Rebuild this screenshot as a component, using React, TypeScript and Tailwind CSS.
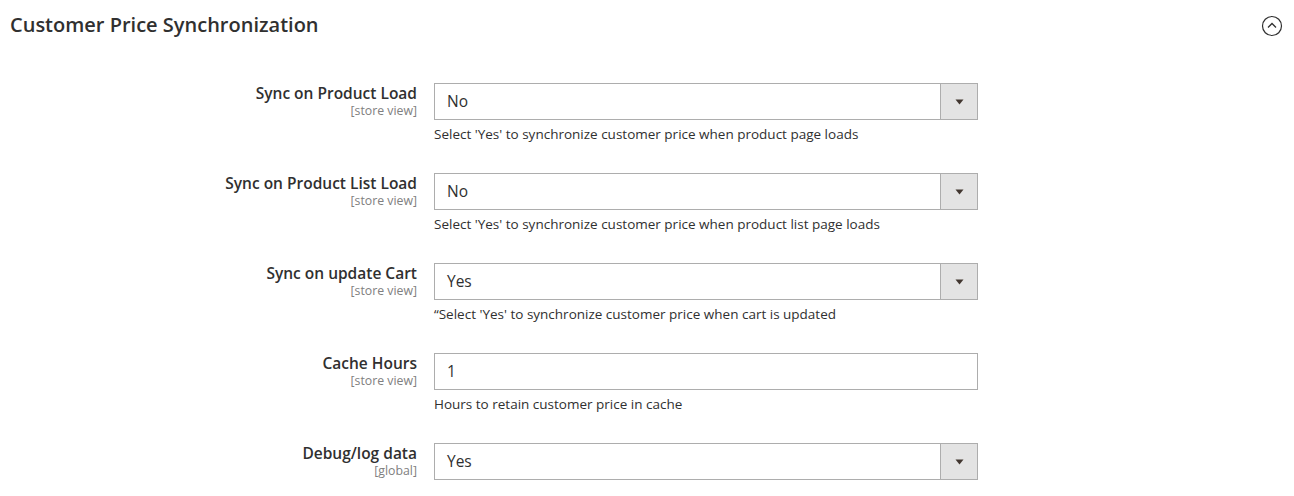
import React from "react";

interface FieldRow {
    label: string;
    scope: string;
    kind: "select" | "text";
    value: string;
    note: string;
}

const rows: FieldRow[] = [
    {
        label: "Sync on Product Load",
        scope: "[store view]",
        kind: "select",
        value: "No",
        note: "Select 'Yes' to synchronize customer price when product page loads",
    },
    {
        label: "Sync on Product List Load",
        scope: "[store view]",
        kind: "select",
        value: "No",
        note: "Select 'Yes' to synchronize customer price when product list page loads",
    },
    {
        label: "Sync on update Cart",
        scope: "[store view]",
        kind: "select",
        value: "Yes",
        note: "\u201cSelect 'Yes' to synchronize customer price when cart is updated",
    },
    {
        label: "Cache Hours",
        scope: "[store view]",
        kind: "text",
        value: "1",
        note: "Hours to retain customer price in cache",
    },
    {
        label: "Debug/log data",
        scope: "[global]",
        kind: "select",
        value: "Yes",
        note: "",
    },
];

function Control({ row }: { row: FieldRow }) {
    return (
        <div className="flex h-[37px] w-[544px] border border-[#adadad] bg-white">
            <div className="flex flex-1 items-center pl-[12px] text-[15.5px] text-[#303030]">{row.value}</div>
            {row.kind === "select" && (
                <div className="flex w-[37px] items-center justify-center border-l border-[#adadad] bg-[#e3e3e3]">
                    <svg width="9" height="6" viewBox="0 0 9 6">
                        <path d="M0.5 0.5 H8.5 L4.5 5.5 Z" fill="#41362f" />
                    </svg>
                </div>
            )}
        </div>
    );
}

export default function App() {
    return (
        <div className="h-[496px] w-[1294px] overflow-hidden bg-white font-['Open_Sans',sans-serif] text-[#303030]">
            <div className="flex items-center justify-between pl-[10px] pr-[10px] pt-[12px]">
                <h2 className="text-[20px] font-semibold leading-[26px] text-[#303030]">
                    Customer Price Synchronization
                </h2>
                <svg width="22" height="22" viewBox="0 0 22 22" className="mr-[1px] mt-[2px]">
                    <circle cx="11" cy="11" r="9.5" fill="none" stroke="#303030" strokeWidth="1.2" />
                    <path d="M7 12.5 L11 8.5 L15 12.5" fill="none" stroke="#303030" strokeWidth="1.3" />
                </svg>
            </div>

            <div className="mt-[45px] flex flex-col">
                {rows.map((row) => (
                    <div key={row.label} className="flex h-[90px]">
                        <div className="w-[434px] pr-[17px] text-right">
                            <div className="text-[15.5px] font-semibold leading-[20px] text-[#303030]">{row.label}</div>
                            <div className="text-[12.3px] leading-[15px] text-[#808080]">{row.scope}</div>
                        </div>
                        <div className="flex flex-col">
                            <Control row={row} />
                            {row.note && (
                                <div className="mt-[5px] text-[13.5px] leading-[18px] text-[#303030]">{row.note}</div>
                            )}
                        </div>
                    </div>
                ))}
            </div>
        </div>
    );
}
